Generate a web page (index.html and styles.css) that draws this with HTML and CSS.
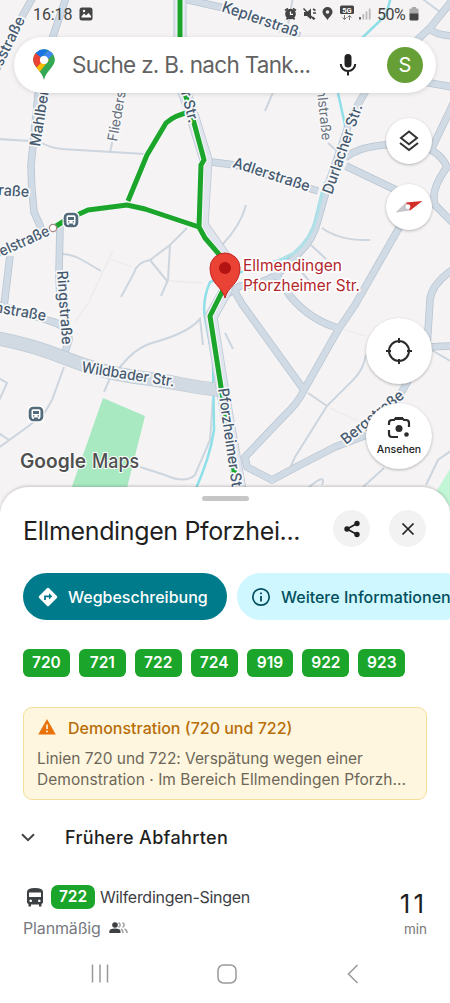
FILE: index.html
```html
<!DOCTYPE html>
<html lang="de">
<head>
<meta charset="utf-8">
<meta name="viewport" content="width=device-width, initial-scale=1">
<title>Ellmendingen Pforzheimer Str.</title>
<link rel="stylesheet" href="styles.css">
</head>
<body>
<div class="screen">
  <section class="map">
    <svg class="map-canvas" viewBox="0 0 450 540" width="450" height="540">
      <defs>
        <g id="wide-roads">
          <path d="M34-5 18 24-6 75"/><path d="M67-5 51 42 38 95 33 145 31 165Q31 188 34 212L42 230"/>
          <path d="M60 224 59 275 60 300"/><path d="M10 256 4 306"/>
          <path d="M-5 304 50 321Q69 326 69 340L65 352"/>
          <path d="M180-2 224 8 300 36"/><path d="M204 161 235 165 318 191"/>
          <path d="M455-3 430 28 415 42 375 75 352 115 328 185 318 220Q313 240 300 252L280 272Q265 284 240 286L224 296"/>
          <path d="M428 28Q436 35 452 36M424 82 452 87M455 100 432 148M345 158Q358 147 385 145L415 144Q440 150 447 167 430 190 435 205L455 225"/>
          <path d="M346 166 396 190M400 226 355 305 338 330 304 390Q298 403 285 415L245 457 247 467 272 480 300 465 335 447 380 430 400 395 427 347 430 300Q431 285 452 270"/>
          <path d="M234 290 242 304 304 390M276 274 290 296Q310 320 338 328M427 347 452 346"/>
        </g>
        <path id="main-road" d="M180-5 180 80 190 108 206 160 202 225 223 255 226 290 211 317 222 387 240 490"/>
        <path id="bus-line" d="M180-5 180 80 190 108 203 156 204 160 201 165 199 227 205 238 224 260M223 290 210 316 221 387 237 490M190 112Q175 115 166 123L147 155 128 201M53 228 66 220 88 210 127 205 145 209 199 227"/>
      </defs>
      <rect width="450" height="540" fill="#f5f3f4"/>
      <path fill="#a8e9c1" d="M103 398 145 416 126 492 70 492Z"/>
      <path fill="#c2f5d6" d="M453 464 436 492 453 510Z"/>
      <g class="thin-roads">
        <path d="M-2 139 30 141 40 142Q50 148 62 149L145 154M110 153 113 138"/>
        <path d="M63 254Q75 255 84 261L101 271M187 228 170 245 150 260Q137 262 134 273L121 297M150 260 167 281M170 245 168 280 161 296"/>
        <path d="M64 367 52 400 45 412 30 425-3 449M-3 377 7 383-2 403M-3 432 9 440"/>
        <path d="M104 392 110 378 128 358Q140 346 155 342 188 333 200 319L203 345M140 467 165 475Q185 484 195 475L210 440 213 398"/>
        <path d="M293-3 287 30M274 90 265 111M420-3 440 12M328 143 338 152M246 205Q241 225 222 245M322 228Q340 241 370 240M311 245 326 259M300 270 315 288"/>
        <path d="M308 393 327 406M366 355Q363 370 354 379L327 406 295 457 291 466M308 488Q327 472 322 485M363 487 384 468M452 450 438 460 426 485M225 333 233 349M430 349 452 362"/>
        <path class="faint" d="M113 250 89 302 75 322M110 259 132 267M170 281 203 283M345 330 366 336M330 408 360 422"/>
      </g>
      <path class="river" d="M391-3 386 15 362 38 345 75 338 93 345 125 346 145M323 188 314 225Q308 245 290 257L238 273 210 282Q202 300 205 318L213 360 214 430Q210 458 194 493"/>
      <use href="#wide-roads" class="road-edge"/><use href="#wide-roads" class="road-fill"/>
      <path class="river-edge" d="M325 182 317 216Q311 239 294 253L268 266"/>
      <path class="trunk-edge" d="M-5 338Q30 344 65 358T135 377Q160 380 180 384T220 390"/>
      <path class="trunk-fill" d="M-5 338Q30 344 65 358T135 377Q160 380 180 384T220 390"/>
      <use href="#main-road" class="main-edge"/><use href="#main-road" class="main-fill"/>
      <use href="#bus-line" class="line-halo"/><use href="#bus-line" class="line-fill"/>
      <circle cx="53" cy="228" r="3.7" fill="#fff" stroke="#a38b8b" stroke-width="1.3"/>
      <g class="street-names">
        <text transform="translate(2 67) rotate(-64)" textLength="53" lengthAdjust="spacingAndGlyphs">sstraße</text>
        <text transform="translate(40 147) rotate(-81)" textLength="66" lengthAdjust="spacingAndGlyphs">Mahlberg</text>
        <text class="minor" transform="translate(117 142) rotate(-80)" textLength="51" lengthAdjust="spacingAndGlyphs">Flieders</text>
        <text transform="translate(-2 195) rotate(4)" textLength="31" lengthAdjust="spacingAndGlyphs">raße</text>
        <text transform="translate(-6 260) rotate(-24)" textLength="62" lengthAdjust="spacingAndGlyphs">belstraße</text>
        <text transform="translate(57 271) rotate(86)" textLength="74" lengthAdjust="spacingAndGlyphs">Ringstraße</text>
        <text transform="translate(-6 312) rotate(10)" textLength="52" lengthAdjust="spacingAndGlyphs">nstraße</text>
        <text transform="translate(81 372) rotate(9)" textLength="94" lengthAdjust="spacingAndGlyphs">Wildbader Str.</text>
        <text transform="translate(221 11) rotate(19)" textLength="80" lengthAdjust="spacingAndGlyphs">Keplerstraß</text>
        <text transform="translate(179 84) rotate(76)" textLength="41" lengthAdjust="spacingAndGlyphs">er Str.</text>
        <text transform="translate(232 167) rotate(18)" textLength="80" lengthAdjust="spacingAndGlyphs">Adlerstraße</text>
        <text class="minor" transform="translate(316 82) rotate(84)" textLength="59" lengthAdjust="spacingAndGlyphs">ühlstraße</text>
        <text transform="translate(332 195) rotate(-71)" textLength="94" lengthAdjust="spacingAndGlyphs">Durlacher Str.</text>
        <text transform="translate(218 389) rotate(82)" textLength="108" lengthAdjust="spacingAndGlyphs">Pforzheimer Str.</text>
        <text transform="translate(346 445) rotate(-39)" textLength="76" lengthAdjust="spacingAndGlyphs">Bergstraße</text>
      </g>
      <g id="bus-stop" transform="translate(71 220)">
        <rect x="-8.5" y="-8.5" width="17" height="17" rx="5" fill="#fff"/>
        <rect x="-7.3" y="-7.3" width="14.6" height="14.6" rx="4.5" fill="#536a7b"/>
        <path fill="#fff" fill-rule="evenodd" d="M-4.500-3.200Q-4.500-4.700-3-4.700H3Q4.500-4.700 4.500-3.200V3.500H3.800V5H2.200V3.500H-2.200V5H-3.800V3.500H-4.500ZM-3-3V0H3V-3ZM-3 1.200V2.500H-1.600V1.200ZM1.600 1.200V2.500H3V1.200Z"/>
      </g>
      <use href="#bus-stop" x="-35" y="194"/>
      <path d="M225 298C222 286 210 284 210 268A15 15 0 0 1 240 268C240 284 228 286 225 298Z" fill="#ea4335" stroke="#c5221f" stroke-width="1"/>
      <circle cx="225" cy="268" r="6" fill="#b31412"/>
      <g class="place-name">
        <text x="243" y="270.500" textLength="99" lengthAdjust="spacingAndGlyphs">Ellmendingen</text>
        <text x="243" y="291" textLength="117" lengthAdjust="spacingAndGlyphs">Pforzheimer Str.</text>
      </g>
      <g class="watermark">
        <text x="20" y="468" font-weight="600" textLength="66" lengthAdjust="spacingAndGlyphs">Google</text>
        <text x="92" y="468" textLength="47" lengthAdjust="spacingAndGlyphs">Maps</text>
      </g>
    </svg>

    <header class="status">
      <span class="clock">16:18</span>
      <svg class="photo" width="14" height="14" viewBox="0 0 14 14"><rect x=".5" y=".5" width="13" height="13" rx="2.500" fill="#444"/><path d="M2.500 9.500 5 6.500 7 8.500 9.500 6 12 9V10.500H2.500Z" fill="#fff"/><circle cx="5" cy="4" r="1.200" fill="#fff"/></svg>
      <svg class="signals" width="91" height="18" viewBox="283 5 91 18">
        <g fill="none" stroke="#444" stroke-width="1.700"><circle cx="290.500" cy="14" r="4.500" fill="#444"/><path d="M285 10.500 288 8.500M296 10.500 293 8.500M286.500 19.500 288 17.500M294.500 19.500 293 17.500"/></g>
        <path d="M290.500 11.500V14.300H293" stroke="#fff" fill="none" stroke-width="1.300"/>
        <path d="M304 12H307L311 8.500V19.500L307 16H304Z" fill="#444"/><path d="M303.500 8.500 314 19.500M313 9 315.500 10.500M313 13H316M312.500 17 315 19" stroke="#444" stroke-width="1.500"/>
        <path d="M327.500 20C326 17 322.500 15 322.500 12A5 5 0 0 1 332.500 12C332.500 15 329 17 327.500 20Z" fill="#444"/><circle cx="327.500" cy="12" r="1.800" fill="#eee"/>
        <rect x="340" y="5.500" width="14" height="8.500" rx="1.500" fill="#444"/><text x="347" y="12.600" text-anchor="middle" font-size="7.500" font-weight="700" fill="#fff">5G</text>
        <path d="M344.500 15V19.500M342.500 17.500 344.500 19.500 346.500 17.500M349.500 20V15.500M347.500 17.500 349.500 15.500 351.500 17.500" fill="none" stroke="#777" stroke-width="1"/>
        <path d="M360 17V19.500" stroke="#555" stroke-width="1.800"/><path d="M363.300 14V19.500M366.500 11.500V19.500M369.700 8.500V19.500" stroke="#bbb" stroke-width="1.800"/>
      </svg>
      <span class="battery-text">50%</span>
      <svg class="battery" width="10" height="14" viewBox="0 0 10 14"><path d="M3 0H7V1.500H8.500Q9.500 1.500 9.500 2.500V7H.5V2.500Q.5 1.500 1.500 1.500H3Z" fill="#aaa"/><path d="M.5 6.500H9.500V12Q9.500 13.500 8 13.500H2Q.5 13.500.5 12Z" fill="#444"/></svg>
    </header>

    <div class="search">
      <svg class="logo" width="22" height="32" viewBox="0 0 22 32">
        <defs><clipPath id="pin"><path d="M11 31C9.500 25 6.500 22.500 3.500 18.500 1.500 16 .2 13.500.2 10.800A10.800 10.500 0 0 1 21.800 10.800C21.800 13.500 20.500 16 18.500 18.500 15.500 22.500 12.500 25 11 31Z"/></clipPath></defs>
        <g clip-path="url(#pin)"><path fill="#34a853" d="M0 0H22V32H0Z"/><path fill="#fbbc04" d="M0 21 16 3 16 11 5 25Z"/><path fill="#ea4335" d="M0 0 11 11 1 21-4 12Z"/><path fill="#1a73e8" d="M2.500 4 8 8.500 16 0H2Z"/><path fill="#4285f4" d="M7 10 17 0 20 5 12 14Z"/></g><circle cx="11" cy="11" r="4.100" fill="#fff"/>
      </svg>
      <span class="placeholder">Suche z. B. nach Tank...</span>
      <svg class="mic" width="18" height="24" viewBox="0 0 18 24"><rect x="5.500" y="1" width="7" height="13.500" rx="3.500" fill="#222"/><path d="M1.800 11A7.200 7 0 0 0 16.200 11M9 18V22.500" fill="none" stroke="#222" stroke-width="2"/></svg>
      <span class="avatar">S</span>
    </div>

    <div class="fab small layers"><svg width="22" height="24" viewBox="0 0 22 24" fill="none" stroke="#333" stroke-width="2"><path d="M11 2.500 19 9 11 15.300 3 9Z"/><path d="M2 14 11 21 20 14"/></svg></div>
    <div class="fab small compass"><svg width="28" height="14" viewBox="0 0 28 14"><path d="M.5 12.500 11 2.500 15 10.500Z" fill="#c6c6ca"/><path d="M27.500 1 11 2.500 15 10.500Z" fill="#d32f2a"/><circle cx="13" cy="6.700" r="2.400" fill="#fff"/></svg></div>
    <div class="fab large locate"><svg width="26" height="26" viewBox="0 0 26 26" fill="none" stroke="#2b2b2b" stroke-width="2"><circle cx="13" cy="13" r="10"/><path d="M13 0V5M13 21V26M0 13H5M21 13H26"/></svg></div>
    <div class="fab large lens"><svg width="24" height="23" viewBox="0 0 24 23"><path d="M2 9V7Q2 4 5 4H7L9 2H15L17 4H19Q22 4 22 7V11M2 14V18Q2 21 5 21H11" fill="none" stroke="#2b2b2b" stroke-width="2.200"/><path d="M8 1H16V4H8Z" fill="#2b2b2b"/><circle cx="12" cy="12.500" r="3.500" fill="#2b2b2b"/><circle cx="19.500" cy="18.500" r="2.300" fill="#2b2b2b"/></svg><span>Ansehen</span></div>
  </section>

  <main class="sheet">
    <div class="handle"></div>
    <div class="heading">
      <h1>Ellmendingen Pforzhei...</h1>
      <button class="round" aria-label="Teilen"><svg width="18" height="20" viewBox="0 0 18 20"><path d="M14 4.500 4 10 14 15.500" fill="none" stroke="#1f1f1f" stroke-width="1.700"/><circle cx="14" cy="4.500" r="2.700" fill="#1f1f1f"/><circle cx="4" cy="10" r="2.700" fill="#1f1f1f"/><circle cx="14" cy="15.500" r="2.700" fill="#1f1f1f"/></svg></button>
      <button class="round" aria-label="Schließen"><svg width="14" height="14" viewBox="0 0 14 14"><path d="M1.500 1.500 12.500 12.500M12.500 1.500 1.500 12.500" stroke="#1f1f1f" stroke-width="1.700"/></svg></button>
    </div>
    <div class="actions">
      <button class="pill primary"><svg width="20" height="20" viewBox="0 0 20 20"><path d="M8.900 1.200Q10 .2 11.100 1.200L18.800 8.900Q19.800 10 18.800 11.100L11.100 18.800Q10 19.800 8.900 18.800L1.200 11.100Q.2 10 1.200 8.900Z" fill="#fff"/><path d="M7 13V9.300H12" fill="none" stroke="#007b8b" stroke-width="1.800"/><path d="M11 6.200 14.300 9.300 11 12.400Z" fill="#007b8b"/></svg><span>Wegbeschreibung</span></button>
      <button class="pill tonal"><svg width="20" height="20" viewBox="0 0 20 20"><circle cx="10" cy="10" r="8.200" fill="none" stroke="#004f5d" stroke-width="1.700"/><path d="M10 9V14.500M10 5.500V7.300" stroke="#004f5d" stroke-width="1.800"/></svg><span>Weitere Informationen</span></button>
    </div>
    <div class="lines"><span>720</span><span>721</span><span>722</span><span>724</span><span>919</span><span>922</span><span>923</span></div>
    <article class="alert">
      <div class="alert-title"><svg width="18" height="16" viewBox="0 0 18 16"><path d="M9 0 17.800 15.500H.2Z" fill="#e8710a"/><path d="M9 5.500V10M9 11.500V13.300" stroke="#fff3d5" stroke-width="1.700"/></svg><h2>Demonstration (720 und 722)</h2></div>
      <p><span class="first">Linien 720 und 722: Verspätung wegen einer</span><br><span class="second">Demonstration · Im Bereich Ellmendingen Pforzh...</span></p>
    </article>
    <div class="earlier"><svg width="14" height="9" viewBox="0 0 14 9"><path d="M1 1.200 7 7.200 13 1.200" fill="none" stroke="#444" stroke-width="2"/></svg><span>Frühere Abfahrten</span></div>
    <div class="departure">
      <div class="trip">
        <div class="route"><svg width="16" height="19" viewBox="0 0 16 19"><path fill="#3c4043" fill-rule="evenodd" d="M0 4Q0 0 8 0T16 4V14Q16 15.500 14.500 16V18.500H12V16.500H4V18.500H1.500V16Q0 15.500 0 14ZM2 4.500V9H14V4.500ZM3.700 11.500A1.300 1.300 0 1 0 3.710 11.500ZM12.300 11.500A1.300 1.300 0 1 0 12.310 11.500Z"/></svg><b>722</b><span>Wilferdingen-Singen</span></div>
        <div class="state"><span>Planmäßig</span><svg width="19" height="12" viewBox="0 0 19 12"><circle cx="6" cy="3" r="2.800" fill="#3c4043"/><path d="M.3 11V9.500Q.3 6.500 6 6.500T11.500 9.500V11Z" fill="#3c4043"/><path d="M9.500.6Q13 3 9.500 5.300M13.500.6Q17 3 13.500 5.300M12 7Q14 8 14 11M15.500 7Q18 8 18 11" fill="none" stroke="#a2a4a6" stroke-width="1.600"/></svg></div>
      </div>
      <div class="wait"><strong>11</strong><span>min</span></div>
    </div>
  </main>
  <nav class="system-nav">
    <svg width="18" height="19" viewBox="0 0 18 19"><path d="M1.500.5V18.500M9 .5V18.500M16.500.5V18.500"/></svg>
    <svg width="20" height="20" viewBox="0 0 20 20"><rect x="1" y="1" width="18" height="18" rx="5.500"/></svg>
    <svg width="12" height="20" viewBox="0 0 12 20"><path d="M10.500 1 1.500 10 10.500 19"/></svg>
  </nav>
</div>
</body>
</html>
```
FILE: styles.css
```css
* { box-sizing: border-box; }
body { margin: 0; font-family: Inter, Roboto, "Liberation Sans", sans-serif; color: #1f1f1f; }
svg { display: block; flex: none; }
h1, h2, p { margin: 0; font-weight: 400; }
button { border: 0; padding: 0; font: inherit; }
.screen { width: 450px; height: 1003px; overflow: hidden; display: flex; flex-direction: column; background: #fff; }

/* map */
.map { position: relative; height: 487px; flex: none; }
.map-canvas { position: absolute; left: 0; top: 0; }
.thin-roads path { fill: none; stroke: #cdd5de; stroke-width: 2; }
.thin-roads .faint { stroke: #ebebed; stroke-width: 1.3; }
.river { fill: none; stroke: #8fdfe9; stroke-width: 2.5; }
.river-edge { fill: none; stroke: #b1e1e8; stroke-width: 3; }
.road-edge { fill: none; stroke: #b7c4d1; stroke-width: 7.5; stroke-linejoin: round; }
.road-fill { fill: none; stroke: #d1dbe5; stroke-width: 6; stroke-linejoin: round; }
.trunk-edge { fill: none; stroke: #bdc9d4; stroke-width: 14; }
.trunk-fill { fill: none; stroke: #d1dae3; stroke-width: 12.5; }
.main-edge { fill: none; stroke: #bdc7d5; stroke-width: 13; stroke-linejoin: round; }
.main-fill { fill: none; stroke: #e0e5ee; stroke-width: 11.5; stroke-linejoin: round; }
.line-halo { fill: none; stroke: #f5f7f8; stroke-width: 7; stroke-linejoin: round; }
.line-fill { fill: none; stroke: #1ba52b; stroke-width: 5; stroke-linejoin: round; }
.street-names text { font-size: 15px; font-weight: 500; fill: #465a70; stroke: #f8f8f9; stroke-width: 3.5px; paint-order: stroke; stroke-linejoin: round; }
.street-names .minor { fill: #68727f; font-weight: 400; font-size: 14px; }
.place-name text { font-size: 15.5px; font-weight: 400; fill: #b3262b; stroke: #fff; stroke-width: 3.5px; paint-order: stroke; }
.watermark { font-size: 20px; font-weight: 500; fill: #505050; stroke: #fff; stroke-width: 2px; paint-order: stroke; }

.status { position: relative; height: 28px; padding: 0 31px 0 33px; display: flex; align-items: center; color: #444; font: 16px Roboto, sans-serif; }
.clock { width: 40px; letter-spacing: -.1px; }
.photo { margin-left: 6px; }
.signals { margin-left: auto; }
.signals text { font-family: Roboto, sans-serif; }
.battery-text { margin: 0 2px 0 3px; width: 30px; letter-spacing: -.5px; }

.search { position: relative; margin: 9px 14px 0; height: 56px; padding: 0 13px 0 19px; border-radius: 28px; background: #fff; box-shadow: 0 1px 5px #0002; display: flex; align-items: center; }
.placeholder { margin-left: 17px; flex: none; width: 256px; color: #626262; font-size: 22.5px; letter-spacing: -.7px; line-height: 30px; white-space: nowrap; }
.mic { margin-left: 11px; }
.avatar { margin-left: auto; width: 36px; height: 36px; border-radius: 50%; background: #669f35; color: #fff; font-size: 20px; display: grid; place-items: center; }

.fab { position: absolute; border-radius: 50%; background: #fff; box-shadow: 0 1px 3px #0004; display: flex; flex-direction: column; align-items: center; justify-content: center; }
.small { width: 46px; height: 46px; right: 18px; }
.large { width: 66px; height: 66px; right: 18px; }
.layers { top: 118px; }
.compass { top: 184px; }
.locate { top: 318px; }
.lens { top: 403px; }
.lens span { margin-top: 5px; font-size: 10.5px; font-weight: 500; line-height: 12px; }

/* place sheet */
.sheet { position: relative; flex: 1; border-radius: 28px 28px 0 0; background: #fff; padding: 9px 23px 0; box-shadow: 0 -1px 3px #0003; }
.handle { width: 47px; height: 5px; margin: 0 auto; border-radius: 3px; background: #c6c6c6; }
.heading { margin-top: 9px; height: 37px; display: flex; align-items: center; }
.heading h1 { width: 310px; font-size: 25px; line-height: 37px; padding-top: 5px; letter-spacing: -.37px; white-space: nowrap; }
.round { width: 37px; height: 37px; border-radius: 50%; background: #f2f2f2; display: grid; place-items: center; }
.round + .round { margin-left: 19px; }
.actions { margin: 26px -23px 0 0; display: flex; gap: 10px; overflow: hidden; }
.pill { flex: none; height: 47px; border-radius: 24px; display: flex; align-items: center; padding-left: 15px; font-size: 16px; font-weight: 500; white-space: nowrap; }
.pill span { margin-left: 10px; }
.primary { width: 204px; background: #007b8b; color: #fff; }
.tonal { width: 230px; padding-left: 14px; background: #cff7ff; color: #004f5d; }
.lines { margin-top: 29px; display: flex; gap: 9px; }
.lines span { width: 46.9px; height: 28px; border-radius: 6px; background: #1ba52b; color: #fff; font-size: 15.5px; font-weight: 600; line-height: 28px; text-align: center; }
.alert { margin-top: 30px; height: 93px; width: 404px; padding: 9px 13px; border: 1px solid #f4df9a; border-radius: 9px; background: #fef6df; }
.alert-title { height: 22px; padding-left: 1px; display: flex; align-items: center; }
.alert-title svg { margin-top: -2px; }
.alert-title h2 { margin-left: 12px; color: #b86e09; font-size: 16px; font-weight: 500; }
.alert p { margin-top: 10px; color: #6d6758; font-size: 15.5px; line-height: 20.5px; white-space: nowrap; }
.first { letter-spacing: -.05px; }
.second { letter-spacing: .04px; }
.earlier { margin-top: 25px; height: 24px; display: flex; align-items: center; font-size: 18px; font-weight: 500; letter-spacing: .34px; }
.earlier svg { margin-left: -2px; }
.earlier span { margin-left: 30px; }
.departure { margin-top: 36px; display: flex; justify-content: space-between; }
.route { height: 24px; display: flex; align-items: center; padding-left: 4px; color: #3c4043; font-size: 16px; letter-spacing: -.28px; }
.route b { margin: 0 5px 0 8px; width: 44px; height: 24px; border-radius: 7px; background: #1ba52b; color: #fff; font-size: 15.5px; font-weight: 600; line-height: 24px; text-align: center; letter-spacing: 0; }
.state { margin-top: 8px; height: 22px; display: flex; align-items: center; color: #777a7e; font-size: 16px; letter-spacing: -.15px; }
.state svg { margin-left: 8px; }
.wait { display: flex; flex-direction: column; align-items: flex-end; }
.wait strong { margin-top: 4px; font-size: 26px; font-weight: 400; line-height: 30px; letter-spacing: 3px; }
.wait span { margin-top: 1px; color: #777; font-size: 13.5px; line-height: 18px; }

.system-nav { position: relative; height: 54px; flex: none; padding: 0 91px 5px; display: flex; align-items: center; justify-content: space-between; background: #fff; }
.system-nav svg { fill: none; stroke: #999; stroke-width: 1.5; }
.system-nav svg:nth-child(2) { margin-left: -3px; }
```
